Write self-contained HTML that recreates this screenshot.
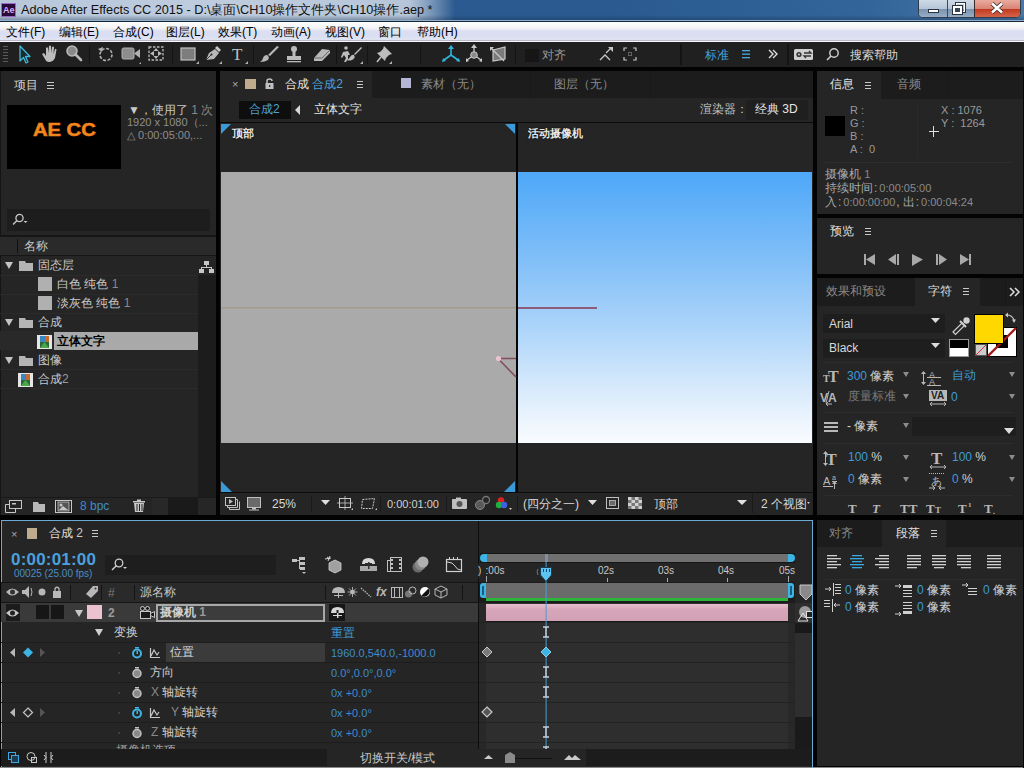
<!DOCTYPE html>
<html><head><meta charset="utf-8">
<style>
*{margin:0;padding:0;box-sizing:border-box}
html,body{width:1024px;height:768px;overflow:hidden;background:#030303;font-family:"Liberation Sans",sans-serif;font-size:12px;color:#c8c8c8}
.a{position:absolute}
.t{position:absolute;white-space:nowrap;line-height:1}
.pan{position:absolute;background:#252525}
.blue{color:#4c9fd8}
.dim{color:#8a8a8a}
</style></head><body>
<!-- TITLE BAR -->
<div class="a" style="left:0;top:0;width:1024px;height:20px;background:linear-gradient(90deg,#2b5a90 0%,#2a5a8f 60%,#33659a 85%,#4a78a6 100%)"></div>
<div class="a" style="left:0;top:0;width:455px;height:20px;background:linear-gradient(90deg,rgba(184,199,218,1) 0%,rgba(190,204,222,1) 50%,rgba(182,197,216,1) 90%,rgba(150,172,200,0.7) 95%,rgba(43,90,144,0) 100%)"></div>
<div class="a" style="left:0;top:15px;width:1024px;height:5px;background:linear-gradient(rgba(20,40,70,0),rgba(20,40,70,0.35))"></div>
<div class="a" style="left:0;top:20px;width:1024px;height:1px;background:#8eb0d0"></div>
<div class="a" style="left:0;top:21px;width:1024px;height:1px;background:#1a2634"></div>
<div class="a" style="left:1px;top:3px;width:15px;height:14px;background:#2a0a3c;border:1px solid #9b6cc6"></div>
<div class="t" style="left:3px;top:6px;font-size:9px;color:#d8b4f8;font-weight:bold">Ae</div>
<div class="t" style="left:21px;top:4px;font-size:12.7px;color:#111">Adobe After Effects CC 2015 - D:\桌面\CH10操作文件夹\CH10操作.aep *</div>
<!-- window buttons -->
<div class="a" style="left:918px;top:-2px;width:103px;height:20px;border:1px solid #2e3c4c;border-radius:0 0 5px 5px;background:#8aa0b8;overflow:hidden;box-shadow:inset 0 0 0 1px rgba(255,255,255,0.45)">
<div class="a" style="left:0;top:0;width:28px;height:10px;background:linear-gradient(#d2dce8,#b4c4d6)"></div>
<div class="a" style="left:0;top:10px;width:28px;height:9px;background:linear-gradient(#7a92ae,#9ab0c8)"></div>
<div class="a" style="left:28px;top:0;width:1px;height:19px;background:#3a4a5c"></div>
<div class="a" style="left:29px;top:0;width:26px;height:10px;background:linear-gradient(#d2dce8,#b4c4d6)"></div>
<div class="a" style="left:29px;top:10px;width:26px;height:9px;background:linear-gradient(#7a92ae,#9ab0c8)"></div>
<div class="a" style="left:55px;top:0;width:1px;height:19px;background:#3a2a2a"></div>
<div class="a" style="left:56px;top:0;width:47px;height:10px;background:linear-gradient(#eab0a4,#d88272)"></div>
<div class="a" style="left:56px;top:10px;width:47px;height:9px;background:linear-gradient(#c0381e,#d86a50)"></div>
</div>
<div class="a" style="left:928px;top:9px;width:11px;height:4px;background:#fff;border:1px solid #2a3440"></div>
<div class="a" style="left:956px;top:3px;width:9px;height:9px;border:1.5px solid #fff;outline:1px solid #2a3440"></div>
<div class="a" style="left:953px;top:6px;width:9px;height:8px;background:#3a4450;border:2px solid #fff;outline:1px solid #2a3440"></div>
<svg class="a" style="left:990px;top:2px" width="14" height="12"><path d="M2 1.5 L12 10.5 M12 1.5 L2 10.5" stroke="#3a2a2a" stroke-width="4.2"/><path d="M2 1.5 L12 10.5 M12 1.5 L2 10.5" stroke="#fff" stroke-width="2.6"/></svg>
<!-- MENU BAR -->
<div class="a" style="left:0;top:22px;width:1024px;height:20px;background:linear-gradient(#fbfefe 0%,#f4f4f6 30%,#dcdff2 45%,#d9def2 70%,#e0e4f2 88%,#b8bac8 90%,#b8bac8 94%,#f8f8fc 95%,#f8f8fc 100%)"></div>
<div class="t" style="left:6px;top:26px;font-size:12px;color:#000">文件(F)</div>
<div class="t" style="left:59px;top:26px;font-size:12px;color:#000">编辑(E)</div>
<div class="t" style="left:113px;top:26px;font-size:12px;color:#000">合成(C)</div>
<div class="t" style="left:166px;top:26px;font-size:12px;color:#000">图层(L)</div>
<div class="t" style="left:218px;top:26px;font-size:12px;color:#000">效果(T)</div>
<div class="t" style="left:271px;top:26px;font-size:12px;color:#000">动画(A)</div>
<div class="t" style="left:325px;top:26px;font-size:12px;color:#000">视图(V)</div>
<div class="t" style="left:378px;top:26px;font-size:12px;color:#000">窗口</div>
<div class="t" style="left:417px;top:26px;font-size:12px;color:#000">帮助(H)</div>
<!-- TOOLBAR -->
<div class="a" style="left:0;top:42px;width:1024px;height:25px;background:#202020"></div>
<svg class="a" style="left:0;top:42px" width="1024" height="25" viewBox="0 0 1024 25">
<g fill="#5a5a5a"><rect x="3" y="4" width="5" height="1"/><rect x="3" y="7" width="5" height="1"/><rect x="3" y="10" width="5" height="1"/><rect x="3" y="13" width="5" height="1"/><rect x="3" y="16" width="5" height="1"/><rect x="3" y="19" width="5" height="1"/></g>
<g fill="#141414"><rect x="89" y="3" width="1" height="19"/><rect x="172" y="3" width="1" height="19"/><rect x="253" y="3" width="1" height="19"/><rect x="336" y="3" width="1" height="19"/><rect x="367" y="3" width="1" height="19"/><rect x="420" y="3" width="1" height="19"/><rect x="515" y="3" width="1" height="19"/><rect x="680" y="2" width="2" height="21"/><rect x="787" y="2" width="2" height="21"/></g>
<!-- arrow -->
<path d="M20 4 L20 19 L23.5 15.5 L26 21 L28 20 L25.5 14.5 L30 14.5 Z" fill="#1a2a30" stroke="#3fb8d8" stroke-width="1.3" stroke-linejoin="round"/>
<!-- hand -->
<path d="M42 12 L44 11 L46 14 L46 6 Q47 4.5 48 6 L48.5 11 L49 4 Q50 3 51 4 L51 11 L52 5 Q53 4 54 5 L53.5 12 L55 7 Q56 6.5 56.5 7.5 L55 16 Q53 20 49 20 Q46 20 45 17 Z" fill="#bdbdbd"/>
<!-- magnifier -->
<circle cx="72" cy="9" r="5" fill="#8a8a8a" stroke="#b8b8b8" stroke-width="1.6"/><path d="M75.5 12.5 L81 18" stroke="#b8b8b8" stroke-width="2.6" stroke-linecap="round"/>
<!-- rotate -->
<circle cx="106" cy="12.5" r="6" fill="none" stroke="#b0b0b0" stroke-width="1.6" stroke-dasharray="3 1.6"/>
<path d="M98 7 L103 5 L102 10 Z" fill="#b0b0b0"/>
<!-- camera -->
<rect x="122" y="6" width="12" height="11" rx="1.5" fill="#8d8d8d" stroke="#b0b0b0" stroke-width="1"/><path d="M134 11.5 L140 7 L140 16 Z" fill="#b0b0b0"/><path d="M139 22 L141 20 L141 22 Z" fill="#b0b0b0"/>
<!-- pan behind -->
<g stroke="#b8b8b8" stroke-width="1.3" fill="none" stroke-dasharray="2.5 1.5"><rect x="149" y="5" width="14" height="13"/></g>
<path d="M150 11.5 L154 9 L154 14 Z M162 11.5 L158 9 L158 14 Z M156 6 L153.5 9 L158.5 9 Z M156 17 L153.5 14 L158.5 14 Z" fill="#b8b8b8"/>
<!-- rect -->
<rect x="181" y="6" width="14" height="12" fill="#7d7d7d" stroke="#c0c0c0" stroke-width="1.2"/><path d="M196 22 L199 19 L199 22 Z" fill="#b0b0b0"/>
<!-- pen -->
<path d="M206 18 L209 11 L215 7 L219 11 L214 17 Z" fill="#b8b8b8"/><path d="M215 6 L217 4 L221 8 L219 10 Z" fill="#c8c8c8"/><path d="M206 18 L211 13" stroke="#222" stroke-width="0.8"/><circle cx="211.5" cy="12.5" r="1" fill="#222"/><path d="M219 22 L222 19 L222 22 Z" fill="#b0b0b0"/>
<!-- T -->
<text x="232" y="18" font-family="Liberation Serif" font-size="17" fill="#c0c0c0">T</text><path d="M245 22 L248 19 L248 22 Z" fill="#b0b0b0"/>
<!-- brush -->
<path d="M277 4 L279 5 L270 14 L268 13 Z" fill="#b8b8b8"/><path d="M267 13 Q270 15 268 18 Q265 20 260 20 Q263 18 263 16 Q264 13 267 13 Z" fill="#b8b8b8"/>
<!-- stamp -->
<circle cx="294" cy="7" r="3" fill="#bbb"/><rect x="292.5" y="9" width="3" height="6" fill="#bbb"/><rect x="287" y="14" width="14" height="4" fill="#bbb"/><rect x="287" y="19" width="14" height="1.3" fill="#bbb"/>
<!-- eraser -->
<path d="M314 16 L322 7 L330 8 L330 11 L322 19 L314 19 Z" fill="#b8b8b8"/><path d="M314 16 L322 16 L330 8" stroke="#555" stroke-width="0.8" fill="none"/>
<!-- roto -->
<circle cx="346" cy="6" r="1.8" fill="#bbb"/><path d="M343 10 L348 9 L350 13 L348 13 L348 17 L346 20 L344 20 L346 16 L344 13 L342 16 L341 15 Z" fill="#bbb"/><path d="M361 5 L362 6 L355 13 L354 12 Z M354 13 Q356 16 352 18 Q349 19 347 18 Q350 16 350 15 Q352 12 354 13Z" fill="#bbb"/><path d="M360 22 L363 19 L363 22 Z" fill="#b0b0b0"/>
<!-- pin -->
<path d="M384 4 L392 12 L389 13 L386 16 L385 19 L377 11 L380 10 L383 7 Z" fill="#bdbdbd"/><path d="M381 15 L377 20" stroke="#bdbdbd" stroke-width="1.6"/><path d="M389 22 L392 19 L392 22 Z" fill="#b0b0b0"/>
<!-- axis blue -->
<g stroke="#32b4dc" stroke-width="1.6" fill="#32b4dc"><path d="M451 13 L451 5" /><path d="M451 13 L444 18"/><path d="M451 13 L458 18"/></g>
<path d="M451 3 L448 7 L454 7 Z M442 20 L443 16 L446 19 Z M460 20 L459 16 L456 19 Z" fill="#32b4dc"/>
<!-- local axis -->
<g stroke="#c8c8c8" stroke-width="1.3"><path d="M474 13 L474 4"/><path d="M474 13 L467 18"/><path d="M474 13 L481 18"/></g><circle cx="474" cy="13" r="3.3" fill="#8a8a8a" stroke="#c8c8c8"/><path d="M474 2 L471 6 L477 6 Z M466 20 L466 16 L469 19 Z M482 20 L482 16 L479 19 Z" fill="#c8c8c8"/>
<!-- world axis -->
<path d="M493 8 L505 5 L505 17 L493 19 Z" fill="#7a7a7a" stroke="#c8c8c8" stroke-width="1.2"/><path d="M491 6 L504 19" stroke="#c8c8c8" stroke-width="1.3"/><path d="M490 5 L494 5 L490 9 Z" fill="#c8c8c8"/>
<!-- align checkbox -->
<rect x="525" y="7" width="14" height="13" fill="#161616"/>
<!-- snap icons -->
<path d="M600 18 L605 13 L610 18" stroke="#c8c8c8" stroke-width="1.3" fill="none"/><path d="M606 11 L611 6" stroke="#c8c8c8" stroke-width="1.2"/><path d="M608 5 L613 5 L613 10 Z" fill="#c8c8c8"/>
<g stroke="#c8c8c8" stroke-width="1.2" fill="none"><path d="M624 9 L624 6 L627 6 M633 6 L636 6 L636 9 M636 15 L636 18 L633 18 M627 18 L624 18 L624 15"/></g><rect x="628.5" y="10.5" width="3" height="3" fill="none" stroke="#c8c8c8" stroke-width="0.8" stroke-dasharray="1 1"/>
<!-- hamburger blue -->
<g fill="#4aa8e0"><rect x="742" y="8" width="8" height="1.3"/><rect x="742" y="11.5" width="8" height="1.3"/><rect x="742" y="15" width="8" height="1.3"/></g>
<path d="M769 8 L773 12 L769 16 M773 8 L777 12 L773 16" stroke="#dcdcdc" stroke-width="1.4" fill="none"/>
<!-- gear swap -->
<rect x="794" y="7" width="19" height="11" rx="1.5" fill="#cfcfcf"/><circle cx="799" cy="12.5" r="2.6" fill="#333"/><circle cx="799" cy="12.5" r="1" fill="#cfcfcf"/><path d="M804 11 L811 11 L809 9 M811 14 L804 14 L806 16" stroke="#333" stroke-width="1.3" fill="none"/>
<!-- search -->
<circle cx="834" cy="11" r="4.2" fill="none" stroke="#d0d0d0" stroke-width="1.4"/><path d="M831 14 L827 18" stroke="#d0d0d0" stroke-width="1.6"/>
</svg>
<div class="t" style="left:542px;top:49px;font-size:12px;color:#9a9a9a">对齐</div>
<div class="t" style="left:705px;top:49px;font-size:12px;color:#3fa2dc">标准</div>
<div class="t" style="left:850px;top:49px;font-size:12px;color:#d8d8d8">搜索帮助</div>

<!-- PROJECT PANEL -->
<div class="pan" style="left:0;top:71px;width:216px;height:444px"></div>
<div class="a" style="left:0;top:71px;width:1px;height:444px;background:#151515"></div>
<div class="t" style="left:14px;top:79px;font-size:12px;color:#d0d0d0">项目</div>
<div class="a" style="left:47px;top:82px;width:7px;height:1px;background:#c8c8c8;box-shadow:0 3px 0 #c8c8c8,0 6px 0 #c8c8c8"></div>
<div class="a" style="left:7px;top:105px;width:114px;height:64px;background:#000"></div>
<div class="t" style="left:33px;top:121px;font-size:18px;font-weight:bold;color:#f28a22;letter-spacing:0px;transform:scaleX(1.12);transform-origin:left;-webkit-text-stroke:0.6px #f07a10">AE CC</div>
<div class="t" style="left:128px;top:104px;font-size:12px;color:#c8c8c8">▼，使用了 <span style="color:#8a8a8a">1 次</span></div>
<div class="t" style="left:127px;top:117px;font-size:11px;color:#8f8f8f">1920 x 1080（...</div>
<div class="t" style="left:127px;top:130px;font-size:11px;color:#8f8f8f">△ 0:00:05:00,...</div>
<div class="a" style="left:7px;top:209px;width:203px;height:22px;background:#1d1d1d"></div>
<svg class="a" style="left:10px;top:212px" width="24" height="16"><circle cx="9.5" cy="6" r="3.6" fill="none" stroke="#c8c8c8" stroke-width="1.3"/><path d="M7 8.5 L3 12.5" stroke="#c8c8c8" stroke-width="1.4"/><path d="M13.5 9 L17.5 9 L15.5 11 Z" fill="#c8c8c8"/></svg>
<div class="a" style="left:0;top:235px;width:216px;height:2px;background:#161616"></div>
<div class="a" style="left:0;top:237px;width:216px;height:18px;background:#2a2a2a"></div>
<div class="a" style="left:17px;top:239px;width:1px;height:14px;background:#111"></div>
<div class="t" style="left:24px;top:240px;font-size:12px;color:#c8c8c8">名称</div>
<div class="a" style="left:0;top:255px;width:216px;height:1px;background:#161616"></div>
<div class="a" style="left:198px;top:275px;width:18px;height:222px;background:#1c1c1c"></div>
<!-- row lines -->
<div class="a" style="left:0;top:275px;width:198px;height:1px;background:#2b2b2b"></div>
<div class="a" style="left:0;top:294px;width:198px;height:1px;background:#2b2b2b"></div>
<div class="a" style="left:0;top:313px;width:198px;height:1px;background:#2b2b2b"></div>
<div class="a" style="left:0;top:331px;width:54px;height:19px;background:#292929"></div>
<div class="a" style="left:54px;top:332px;width:144px;height:18px;background:#a9a9a9"></div>
<div class="a" style="left:0;top:369px;width:198px;height:1px;background:#2b2b2b"></div>
<div class="a" style="left:0;top:388px;width:198px;height:1px;background:#2b2b2b"></div>
<svg class="a" style="left:0;top:256px" width="216" height="135">
<g fill="#c4c4c4"><path d="M5 6 L13 6 L9 13 Z"/><path d="M5 63 L13 63 L9 70 Z"/><path d="M5 101 L13 101 L9 108 Z"/></g>
<g fill="#b4b4b4"><path d="M19 5 L25 5 L26 7 L33 7 L33 15 L19 15 Z"/><path d="M19 62 L25 62 L26 64 L33 64 L33 72 L19 72 Z"/><path d="M19 100 L25 100 L26 102 L33 102 L33 110 L19 110 Z"/></g>
<rect x="38" y="21" width="14" height="14" fill="#b0b0b0"/><rect x="38" y="40" width="14" height="14" fill="#b0b0b0"/>
<g><rect x="37" y="79" width="15" height="14" fill="#e6e6e6"/><rect x="40" y="80" width="9" height="12" fill="#2a6a3a"/><rect x="40" y="80" width="5" height="6" fill="#3a86c0"/><rect x="45" y="80" width="4" height="6" fill="#c86a2a"/><path d="M40 92 L44.5 86 L49 92Z" fill="#4aa84a"/></g>
<g><rect x="18" y="117" width="15" height="14" fill="#e6e6e6"/><rect x="21" y="118" width="9" height="12" fill="#2a6a3a"/><rect x="21" y="118" width="5" height="6" fill="#3a86c0"/><rect x="26" y="118" width="4" height="6" fill="#c86a2a"/><path d="M21 130 L25.5 124 L30 130Z" fill="#4aa84a"/></g>
<g fill="#c8c8c8"><rect x="204" y="5" width="5" height="4"/><rect x="206" y="9" width="1" height="2"/><rect x="201" y="11" width="11" height="1"/><rect x="201" y="11" width="1" height="2"/><rect x="211" y="11" width="1" height="2"/><rect x="199" y="13" width="5" height="4"/><rect x="209" y="13" width="5" height="4"/></g>
</svg>
<div class="t" style="left:38px;top:259px;font-size:12px;color:#c8c8c8">固态层</div>
<div class="t" style="left:57px;top:278px;font-size:12px;color:#c8c8c8">白色 纯色 <span style="color:#8a8a8a">1</span></div>
<div class="t" style="left:57px;top:297px;font-size:12px;color:#c8c8c8">淡灰色 纯色 <span style="color:#8a8a8a">1</span></div>
<div class="t" style="left:38px;top:316px;font-size:12px;color:#c8c8c8">合成</div>
<div class="t" style="left:57px;top:335px;font-size:12px;color:#000;font-weight:bold">立体文字</div>
<div class="t" style="left:38px;top:354px;font-size:12px;color:#c8c8c8">图像</div>
<div class="t" style="left:38px;top:373px;font-size:12px;color:#c8c8c8">合成<span style="color:#9a9a9a">2</span></div>
<!-- bottom bar -->
<div class="a" style="left:0;top:497px;width:216px;height:1px;background:#191919"></div>
<div class="a" style="left:152px;top:498px;width:16px;height:17px;background:#282828"></div>
<div class="a" style="left:168px;top:498px;width:30px;height:17px;background:#1a1a1a"></div>
<div class="a" style="left:198px;top:498px;width:18px;height:17px;background:#262626"></div>
<svg class="a" style="left:0;top:497px" width="152" height="18">
<g fill="none" stroke="#c8c8c8" stroke-width="1"><rect x="9.5" y="3.5" width="12" height="8"/><path d="M5.5 7.5 L9 7.5 M5.5 7.5 L5.5 15.5 L15.5 15.5 L15.5 12"/></g><rect x="12" y="6" width="4" height="1.5" fill="#c8c8c8"/>
<path d="M33 5 L38 5 L39 7 L45 7 L45 15 L33 15 Z" fill="#b8b8b8"/>
<rect x="55.5" y="3.5" width="16" height="12" fill="none" stroke="#c8c8c8"/><rect x="58" y="5" width="11" height="9" fill="#555" stroke="#c8c8c8" stroke-width="0.8"/><circle cx="61" cy="8" r="1.5" fill="#c8c8c8"/><path d="M59 13 L63 9 L68 13Z" fill="#c8c8c8"/>
<g fill="#c8c8c8"><rect x="133" y="4" width="12" height="1.5"/><rect x="137" y="2.5" width="4" height="1.5"/><path d="M134 6 L144 6 L143 15 L135 15 Z"/></g><g fill="#232323"><rect x="136.5" y="7" width="1" height="7"/><rect x="139" y="7" width="1" height="7"/><rect x="141.5" y="7" width="1" height="7"/></g>
</svg>
<div class="t" style="left:80px;top:500px;font-size:12px;color:#3e8cc4">8 bpc</div>

<!-- COMP PANEL -->
<div class="pan" style="left:220px;top:71px;width:593px;height:444px"></div>
<div class="a" style="left:372px;top:71px;width:441px;height:27px;background:#1c1c1c"></div>
<div class="a" style="left:530px;top:71px;width:1px;height:27px;background:#191919"></div>
<div class="a" style="left:650px;top:71px;width:1px;height:27px;background:#191919"></div>
<div class="t" style="left:232px;top:79px;font-size:11px;color:#a8a8a8">×</div>
<div class="a" style="left:245px;top:79px;width:11px;height:10px;background:#bfac8c"></div>
<svg class="a" style="left:264px;top:78px" width="12" height="12"><path d="M3 5 L3 3 Q3 1 5.5 1 Q8 1 8 3" fill="none" stroke="#c0c0c0" stroke-width="1.5"/><rect x="1.5" y="5" width="8" height="6" fill="#c0c0c0"/><rect x="5" y="7" width="1.3" height="2" fill="#333"/></svg>
<div class="t" style="left:285px;top:78px;font-size:12px;color:#e6e6e6">合成 <span style="color:#4ea2d8">合成<span style="font-size:12px">2</span></span></div>
<div class="a" style="left:357px;top:81px;width:6px;height:1px;background:#c8c8c8;box-shadow:0 3px 0 #c8c8c8,0 6px 0 #c8c8c8"></div>
<div class="a" style="left:401px;top:78px;width:10px;height:10px;background:#b5b5d6"></div>
<div class="t" style="left:421px;top:78px;font-size:12px;color:#8a8a8a">素材（无）</div>
<div class="t" style="left:554px;top:78px;font-size:12px;color:#8a8a8a">图层（无）</div>
<!-- breadcrumb -->
<div class="a" style="left:239px;top:101px;width:52px;height:18px;background:#0e0e0e"></div>
<div class="t" style="left:249px;top:103px;font-size:12px;color:#4ea2d8">合成2</div>
<svg class="a" style="left:294px;top:104px" width="8" height="12"><path d="M6 1 L1 6 L6 11 Z" fill="#d8d8d8"/></svg>
<div class="t" style="left:314px;top:103px;font-size:12px;color:#e6e6e6">立体文字</div>
<div class="t" style="left:700px;top:103px;font-size:12px;color:#c0c0c0">渲染器：</div>
<div class="a" style="left:746px;top:100px;width:62px;height:20px;background:#1f1f1f"></div>
<div class="t" style="left:755px;top:103px;font-size:12px;color:#e6e6e6">经典 3D</div>
<div class="a" style="left:220px;top:122px;width:593px;height:1px;background:#0a0a0a"></div>
<!-- views -->
<div class="a" style="left:221px;top:172px;width:295px;height:271px;background:#aaaaaa"></div>
<div class="a" style="left:518px;top:172px;width:294px;height:271px;background:linear-gradient(#4ea8f8 0%,#7dbdf8 30%,#a8d2f9 55%,#d4e8fb 78%,#fafcff 100%)"></div>
<div class="a" style="left:516px;top:123px;width:2px;height:370px;background:#050505"></div>
<div class="a" style="left:220px;top:492px;width:593px;height:1px;background:#0c0c0c"></div>
<svg class="a" style="left:220px;top:123px" width="593" height="370">
<path d="M1 1 L11 1 L1 11 Z" fill="#3a9ad8"/>
<path d="M285 1 L295 1 L295 11 Z" fill="#3a9ad8"/>
<path d="M1 358 L1 369 L12 369 Z" fill="#3a9ad8"/>
<path d="M295 358 L295 369 L284 369 Z" fill="#3a9ad8"/>
<rect x="1" y="184" width="295" height="1.3" fill="#a49a88"/>
<rect x="298" y="184" width="79" height="2" fill="#8c5c78"/>
<path d="M278 235.5 L296 235.5 M278 235.5 L296 254" stroke="#80505e" stroke-width="1.6" fill="none"/>
<circle cx="278.5" cy="235.5" r="2.6" fill="#ebc3cf"/>
</svg>
<div class="t" style="left:232px;top:128px;font-size:11px;color:#e8e8e8;font-weight:bold;text-shadow:0 0 2px #000">顶部</div>
<div class="t" style="left:528px;top:128px;font-size:11px;color:#e8e8e8;font-weight:bold;text-shadow:0 0 2px #000">活动摄像机</div>
<!-- bottom bar -->
<div class="a" style="left:220px;top:493px;width:593px;height:20px;background:#252525"></div>
<svg class="a" style="left:220px;top:493px" width="593" height="22">
<g fill="none" stroke="#c0c0c0" stroke-width="1"><rect x="5.5" y="4.5" width="10" height="8"/><path d="M7.5 12.5 L7.5 14.5 L17.5 14.5 L17.5 6.5 L15.5 6.5 M9.5 14.5 L9.5 16.5 L19.5 16.5 L19.5 8.5"/></g><path d="M9 6 L13 8.5 L9 11Z" fill="#c0c0c0"/>
<rect x="27.5" y="4.5" width="13" height="10" fill="#6a6a6a" stroke="#c0c0c0"/><rect x="32" y="15" width="4" height="1.5" fill="#c0c0c0"/><rect x="29" y="16.5" width="10" height="1" fill="#c0c0c0"/>
<rect x="91" y="3" width="1" height="16" fill="#1a1a1a"/>
<path d="M101 7 L110 7 L105.5 12 Z" fill="#e0e0e0"/>
<g fill="none" stroke="#c8c8c8" stroke-width="1"><rect x="119.5" y="5.5" width="11" height="9"/><path d="M125 3 L125 17 M117 10 L133 10" stroke-width="0.8"/><path d="M142.5 6.5 L154.5 5.5 L152.5 15.5 L141.5 15.5 Z" stroke-dasharray="2 1"/></g>
<path d="M131 17 L133 15 L133 17Z M155 17 L157 15 L157 17Z" fill="#c8c8c8"/>
<rect x="160" y="3" width="1" height="16" fill="#1a1a1a"/>
<rect x="226" y="3" width="1" height="16" fill="#1a1a1a"/>
<rect x="232" y="6" width="15" height="10" rx="1" fill="#c0c0c0"/><rect x="236" y="4.5" width="5" height="2" fill="#c0c0c0"/><circle cx="239.5" cy="11" r="3" fill="#555"/>
<circle cx="260" cy="12" r="4.5" fill="#5a5a5a" stroke="#888" stroke-width="1"/><circle cx="266" cy="7" r="3.5" fill="none" stroke="#777" stroke-width="1.3"/>
<circle cx="281" cy="7.5" r="3.2" fill="#e02020"/><circle cx="279" cy="12" r="3.2" fill="#20b040"/><circle cx="284" cy="12" r="3.2" fill="#4060e0"/><path d="M289 15 L292 15 L290.5 17Z" fill="#c8c8c8"/>
<rect x="297" y="3" width="1" height="16" fill="#1a1a1a"/>
<path d="M368 7 L377 7 L372.5 12 Z" fill="#e0e0e0"/>
<rect x="386.5" y="4.5" width="12" height="11" fill="none" stroke="#c0c0c0"/><rect x="389.5" y="7.5" width="6" height="5" fill="#6a6a6a" stroke="#c0c0c0" stroke-width="0.8"/>
<g fill="#d0d0d0"><rect x="408" y="4" width="14" height="12" fill="#777"/><rect x="408" y="4" width="3.5" height="3"/><rect x="415" y="4" width="3.5" height="3"/><rect x="411.5" y="7" width="3.5" height="3"/><rect x="418.5" y="7" width="3.5" height="3"/><rect x="408" y="10" width="3.5" height="3"/><rect x="415" y="10" width="3.5" height="3"/><rect x="411.5" y="13" width="3.5" height="3"/><rect x="418.5" y="13" width="3.5" height="3"/></g>
<path d="M517 7 L527 7 L522 12 Z" fill="#e0e0e0"/>
<rect x="532" y="0" width="1" height="20" fill="#1a1a1a"/>
<path d="M587 9 L590 9 L588.5 11Z" fill="#c8c8c8"/>
</svg>
<div class="t" style="left:272px;top:498px;font-size:12px;color:#d8d8d8">25%</div>
<div class="t" style="left:387px;top:499px;font-size:11px;color:#d0d0d0">0:00:01:00</div>
<div class="t" style="left:523px;top:498px;font-size:12px;color:#d8d8d8">(四分之一)</div>
<div class="t" style="left:654px;top:498px;font-size:12px;color:#d8d8d8">顶部</div>
<div class="t" style="left:761px;top:498px;font-size:12px;color:#d8d8d8">2 个视图</div>

<!-- INFO -->
<div class="pan" style="left:817px;top:71px;width:207px;height:143px"></div>
<div class="a" style="left:881px;top:71px;width:143px;height:28px;background:#1c1c1c"></div>
<div class="a" style="left:948px;top:71px;width:1px;height:28px;background:#191919"></div>

<div class="t" style="left:830px;top:78px;font-size:12px;color:#e0e0e0">信息</div>
<div class="a" style="left:865px;top:82px;width:6px;height:1px;background:#c8c8c8;box-shadow:0 3px 0 #c8c8c8,0 6px 0 #c8c8c8"></div>
<div class="t" style="left:897px;top:78px;font-size:12px;color:#8a8a8a">音频</div>
<div class="a" style="left:825px;top:116px;width:20px;height:20px;background:#000"></div>
<div class="t" style="left:850px;top:104px;font-size:11px;line-height:13px;color:#9a9a9a;white-space:pre">R :
G :
B :
A :  0</div>
<div class="a" style="left:917px;top:103px;width:1px;height:54px;background:#2a2a2a"></div>
<div class="t" style="left:941px;top:104px;font-size:11px;line-height:13px;color:#9a9a9a;white-space:pre">X : 1076
Y :  1264</div>
<div class="a" style="left:929px;top:131px;width:10px;height:1px;background:#e0e0e0"></div>
<div class="a" style="left:933px;top:126px;width:1px;height:11px;background:#e0e0e0"></div>
<div class="a" style="left:825px;top:162px;width:188px;height:1px;background:#2d2d2d"></div>
<div class="t" style="left:825px;top:167px;font-size:12px;line-height:14px;color:#a8a8a8;white-space:pre">摄像机 <span style="color:#8a8a8a;font-size:11px">1</span>
持续时间<span style="margin:0 2px 0 1px">:</span><span style="color:#8a8a8a;font-size:11px">0:00:05:00</span>
入<span style="margin:0 2px 0 1px">:</span><span style="color:#8a8a8a;font-size:11px">0:00:00:00</span><span style="margin:0 3px 0 1px">,</span>出<span style="margin:0 2px 0 1px">:</span><span style="color:#8a8a8a;font-size:11px">0:00:04:24</span></div>
<!-- PREVIEW -->
<div class="pan" style="left:817px;top:218px;width:207px;height:56px"></div>
<div class="t" style="left:830px;top:225px;font-size:12px;color:#e0e0e0">预览</div>
<div class="a" style="left:865px;top:228px;width:6px;height:1px;background:#c8c8c8;box-shadow:0 3px 0 #c8c8c8,0 6px 0 #c8c8c8"></div>
<svg class="a" style="left:860px;top:252px" width="120" height="16" fill="#a8a8a8">
<rect x="4" y="2" width="2" height="11"/><path d="M6 7.5 L15 2 L15 13Z"/>
<path d="M28 7.5 L36 2 L36 13Z"/><rect x="37" y="2" width="2" height="11"/>
<path d="M52 2 L63 7.5 L52 14Z"/>
<rect x="76" y="2" width="2" height="11"/><path d="M79 2 L87 7.5 L79 13Z"/>
<path d="M100 2 L109 7.5 L100 13Z"/><rect x="109" y="2" width="2" height="11"/>
</svg>
<!-- CHARACTER -->
<div class="pan" style="left:817px;top:278px;width:207px;height:237px"></div>
<div class="a" style="left:817px;top:278px;width:98px;height:28px;background:#1c1c1c"></div>
<div class="a" style="left:980px;top:278px;width:44px;height:28px;background:#1c1c1c"></div>
<div class="a" style="left:1005px;top:278px;width:1px;height:28px;background:#161616"></div>
<div class="t" style="left:826px;top:285px;font-size:12px;color:#8a8a8a">效果和预设</div>
<div class="t" style="left:928px;top:285px;font-size:12px;color:#e0e0e0">字符</div>
<div class="a" style="left:963px;top:288px;width:6px;height:1px;background:#c8c8c8;box-shadow:0 3px 0 #c8c8c8,0 6px 0 #c8c8c8"></div>
<svg class="a" style="left:1008px;top:285px" width="14" height="14"><path d="M2 3 L6 7 L2 11 M7 3 L11 7 L7 11" stroke="#e0e0e0" stroke-width="1.5" fill="none"/></svg>
<div class="a" style="left:823px;top:314px;width:122px;height:19px;background:#1e1e1e"></div>
<div class="a" style="left:823px;top:339px;width:122px;height:19px;background:#1e1e1e"></div>
<div class="t" style="left:829px;top:318px;font-size:12px;color:#d8d8d8">Arial</div>
<div class="t" style="left:829px;top:342px;font-size:12px;color:#d8d8d8">Black</div>
<div class="a" style="left:823px;top:362px;width:190px;height:1px;background:#2c2c2c"></div>
<div class="a" style="left:823px;top:412px;width:190px;height:1px;background:#2c2c2c"></div>
<div class="a" style="left:823px;top:443px;width:190px;height:1px;background:#2c2c2c"></div>
<div class="a" style="left:823px;top:495px;width:190px;height:1px;background:#2c2c2c"></div>
<div class="a" style="left:912px;top:417px;width:104px;height:19px;background:#1e1e1e"></div>

<svg class="a" style="left:817px;top:306px" width="207" height="210">
<g fill="#dcdcdc"><path d="M114 12 L123 12 L118.5 17Z"/><path d="M114 37 L123 37 L118.5 42Z"/><path d="M187 122 L197 122 L192 128Z"/></g>
<g fill="#8c8c8c"><path d="M86 66 L92 66 L89 71Z"/><path d="M86 88 L92 88 L89 93Z"/><path d="M86 117 L92 117 L89 122Z"/><path d="M86 149 L92 149 L89 154Z"/><path d="M86 171 L92 171 L89 176Z"/><path d="M192 66 L198 66 L195 71Z"/><path d="M192 88 L198 88 L195 93Z"/><path d="M192 149 L198 149 L195 154Z"/><path d="M192 171 L198 171 L195 176Z"/></g>
<!-- eyedropper -->
<path d="M136 26 L145 17 L147.5 19.5 L138.5 28.5 Z" fill="none" stroke="#d0d0d0" stroke-width="1.2"/>
<path d="M143 15 L149 21" stroke="#d0d0d0" stroke-width="2"/>
<circle cx="149.5" cy="14.5" r="3.2" fill="#d0d0d0"/>
<!-- swatches -->
<rect x="170.5" y="21.5" width="29" height="29" fill="#fff" stroke="#000" stroke-width="1"/>
<rect x="179" y="29" width="12" height="13" fill="#000"/>
<path d="M171 50 L199 22" stroke="#a01818" stroke-width="2.4"/>
<rect x="157.5" y="8.5" width="29" height="29" fill="#ffd800" stroke="#000" stroke-width="1"/>
<path d="M190 9 Q195 9 197 14" stroke="#c8c8c8" stroke-width="1.2" fill="none"/><path d="M188 9 L191 6.5 L191 11.5Z M195 13.5 L199 13.5 L197 17Z" fill="#c8c8c8"/>
<rect x="132.5" y="33.5" width="19" height="17" fill="#fff" stroke="#999"/><rect x="133" y="34" width="18" height="8" fill="#000"/>
<rect x="158.5" y="38.5" width="11" height="11" fill="#ccc" stroke="#555"/><path d="M159 49 L169 39" stroke="#e03030" stroke-width="1"/>
<!-- icons row -->
<g fill="#b8b8b8" font-family="Liberation Serif" font-weight="bold">
<text x="6" y="76" font-size="10">T</text><text x="11" y="76" font-size="16">T</text>
<text x="18" y="207" font-size="13" transform="translate(13 0)">T</text><text x="55" y="207" font-size="13" font-style="italic">T</text><text x="83" y="207" font-size="13">TT</text><text x="109" y="207" font-size="13">T</text><text x="118" y="207" font-size="9">T</text><text x="141" y="207" font-size="13">T</text><text x="151" y="201" font-size="7">1</text><text x="167" y="207" font-size="13">T</text><text x="176" y="208" font-size="8">.</text>
<text x="9" y="159" font-size="16">T</text>
<text x="114" y="158" font-size="17">T</text>
</g>
<g fill="#b8b8b8" font-family="Liberation Sans">
<text x="112" y="72" font-size="9">A</text><text x="112" y="79" font-size="9">A</text>
<text x="3" y="96" font-size="12" font-weight="bold">V</text><text x="11" y="96" font-size="12" font-weight="bold">A</text>
<text x="6" y="179" font-size="11">A</text><text x="15" y="174" font-size="7">a</text>
</g>
<g fill="#b8b8b8">
<rect x="110" y="71" width="14" height="1"/><rect x="110" y="79" width="14" height="1"/>
<path d="M104 68 L106.5 65 L109 68Z M104 76 L106.5 79 L109 76Z"/><rect x="106" y="67" width="1" height="10"/>
<path d="M9 98 L15 98 M11 96 L9 98 L11 100" stroke="#b8b8b8" fill="none"/><path d="M9 97 L12 85" stroke="#b8b8b8"/>
<rect x="112" y="84" width="18" height="11"/>
<path d="M113 98 L129 98 M115 96 L113 98 L115 100 M127 96 L129 98 L127 100" stroke="#b8b8b8" fill="none"/>
<rect x="7" y="116" width="14" height="2"/><rect x="7" y="120" width="14" height="2"/><rect x="7" y="124" width="14" height="2"/>
<rect x="8" y="147" width="1" height="11"/><path d="M6 148 L8.5 145 L11 148Z M6 157 L8.5 160 L11 157Z"/>
<rect x="6" y="180" width="10" height="1"/><rect x="17" y="177" width="1" height="6"/><path d="M15 178 L17.5 175 L20 178Z"/><rect x="15" y="175" width="5" height="1"/>
<path d="M113 161 L129 161 M115 159 L113 161 L115 163 M127 159 L129 161 L127 163" stroke="#b8b8b8" fill="none"/>
<path d="M112 182 L118 182 M116 180 L118 182 L116 184 M128 182 L122 182 M124 180 L122 182 L124 184" stroke="#b8b8b8" fill="none"/>
<rect x="112" y="167" width="1" height="1"/><rect x="114" y="167" width="1" height="1"/><rect x="116" y="167" width="1" height="1"/><rect x="118" y="167" width="1" height="1"/><rect x="120" y="167" width="1" height="1"/><rect x="122" y="167" width="1" height="1"/><rect x="124" y="167" width="1" height="1"/><rect x="126" y="167" width="1" height="1"/>
</g>
<text x="114" y="93" font-size="10" font-weight="bold" fill="#222" font-family="Liberation Sans">VA</text>
<text x="114" y="179" font-size="11" fill="#b8b8b8">あ</text>
</svg>
<div class="t" style="left:847px;top:370px;font-size:12px;color:#d0d0d0"><span style="color:#3e9ad6">300</span> 像素</div>
<div class="t" style="left:952px;top:369px;font-size:12px;color:#3e9ad6">自动</div>
<div class="t" style="left:848px;top:390px;font-size:12px;color:#7a7a7a">度量标准</div>
<div class="t" style="left:951px;top:391px;font-size:12px;color:#3e9ad6">0</div>
<div class="t" style="left:847px;top:420px;font-size:12px;color:#d0d0d0">- 像素</div>
<div class="t" style="left:848px;top:451px;font-size:12px;color:#d0d0d0"><span style="color:#3e9ad6">100</span> %</div>
<div class="t" style="left:952px;top:451px;font-size:12px;color:#d0d0d0"><span style="color:#3e9ad6">100</span> %</div>
<div class="t" style="left:848px;top:473px;font-size:12px;color:#d0d0d0"><span style="color:#3e9ad6">0</span> 像素</div>
<div class="t" style="left:952px;top:473px;font-size:12px;color:#d0d0d0"><span style="color:#3e9ad6">0</span> %</div>

<!-- TIMELINE -->
<div class="pan" style="left:1px;top:520px;width:812px;height:248px;border:1px solid #6aaad4;border-bottom:none"></div>
<div class="t" style="left:11px;top:529px;font-size:11px;color:#a8a8a8">×</div>
<div class="a" style="left:27px;top:528px;width:10px;height:11px;background:#bfac8c"></div>
<div class="t" style="left:49px;top:527px;font-size:12px;color:#e0e0e0">合成<span style="color:#c8c8c8"> 2</span></div>
<div class="a" style="left:92px;top:530px;width:6px;height:1px;background:#c8c8c8;box-shadow:0 3px 0 #c8c8c8,0 6px 0 #c8c8c8"></div>
<div class="t" style="left:11px;top:551px;font-size:17px;font-weight:bold;color:#4aa0dc;letter-spacing:0.2px">0:00:01:00</div>
<div class="t" style="left:14px;top:569px;font-size:10px;color:#4a8ec4">00025 (25.00 fps)</div>
<div class="a" style="left:105px;top:555px;width:171px;height:20px;background:#1e1e1e"></div>
<svg class="a" style="left:108px;top:557px" width="24" height="16"><circle cx="11" cy="6" r="3.8" fill="none" stroke="#d0d0d0" stroke-width="1.3"/><path d="M8.5 8.5 L4 13" stroke="#d0d0d0" stroke-width="1.5"/><path d="M15 10 L19 10 L17 12 Z" fill="#d0d0d0"/></svg>
<svg class="a" style="left:285px;top:553px" width="190" height="26">
<g fill="#c0c0c0"><rect x="7" y="6" width="5" height="3"/><rect x="12" y="7" width="3" height="1"/><rect x="14" y="4" width="1" height="12"/><rect x="15" y="4" width="5" height="3"/><rect x="15" y="9" width="5" height="3"/><rect x="15" y="14" width="5" height="3"/><path d="M17 19 L21 19 L19 21Z"/></g>
<g fill="#c0c0c0"><path d="M44 10 L50 7 L56 10 L56 17 L50 20 L44 17Z" fill="#a0a0a0" stroke="#d0d0d0" stroke-width="0.8"/><path d="M42 4 L45 6 M45 3 L43 8 M40 6 L46 5" stroke="#d0d0d0" stroke-width="1"/></g>
<g fill="#a8a8a8"><rect x="75" y="13" width="17" height="5"/><path d="M77 11 Q77 5 83.5 5 Q90 5 90 11 Z" fill="#d8d8d8"/><rect x="83" y="9" width="1.5" height="7" fill="#333"/><rect x="80" y="10" width="7" height="1.2" fill="#333"/></g>
<g fill="none" stroke="#c0c0c0"><rect x="105.5" y="4.5" width="11" height="14"/><rect x="102.5" y="7.5" width="3" height="11"/></g><g fill="#c0c0c0"><rect x="106" y="6" width="2" height="2"/><rect x="106" y="10" width="2" height="2"/><rect x="106" y="14" width="2" height="2"/><rect x="114" y="6" width="2" height="2"/><rect x="114" y="10" width="2" height="2"/><rect x="114" y="14" width="2" height="2"/></g>
<circle cx="133" cy="14" r="5.5" fill="#6a6a6a"/><circle cx="135.5" cy="11.5" r="5.5" fill="#888"/><circle cx="138" cy="9" r="5.5" fill="#b0b0b0"/>
<rect x="161.5" y="6.5" width="15" height="12" fill="none" stroke="#d0d0d0" stroke-width="1.2"/><path d="M162 9 Q168 9 170 13 Q172 17 176 17" stroke="#d0d0d0" fill="none"/><g fill="#d0d0d0"><rect x="164" y="4" width="1" height="2"/><rect x="168" y="4" width="1" height="2"/><rect x="172" y="4" width="1" height="2"/></g>
</svg>
<!-- column header -->
<div class="a" style="left:1px;top:582px;width:477px;height:1px;background:#151515"></div>
<div class="a" style="left:1px;top:583px;width:477px;height:19px;background:#2a2a2a"></div>
<div class="a" style="left:1px;top:602px;width:477px;height:1px;background:#151515"></div>
<svg class="a" style="left:0;top:583px" width="478" height="19">
<g fill="#b8b8b8"><path d="M6 9 Q12 2 19 9 Q12 16 6 9Z"/><circle cx="12.5" cy="9" r="2.5" fill="#333"/>
<path d="M22 7 L25 7 L29 3 L29 15 L25 11 L22 11Z"/><path d="M31 5 Q33 9 31 13" stroke="#b8b8b8" fill="none"/>
<circle cx="42" cy="9" r="3.5"/>
<rect x="53" y="8" width="8" height="7"/><path d="M55 8 L55 5.5 Q57 3 59 5.5 L59 8" stroke="#b8b8b8" stroke-width="1.3" fill="none"/>
<path d="M86 11 L93 3 L98 3 L98 8 L91 15Z"/><circle cx="95.5" cy="5.5" r="1" fill="#333"/>
<path d="M332 10 Q332 4 338.5 4 Q345 4 345 10 Z M338 10 L339 10 L339 15 L338 15Z M334 12 L343 12 L343 13 L334 13Z"/>
<circle cx="352.5" cy="9" r="2.3"/><path d="M352.5 4 L352.5 14 M347.5 9 L357.5 9 M349 5.5 L356 12.5 M356 5.5 L349 12.5" stroke="#b8b8b8" stroke-width="0.9"/>
<path d="M361 5 L371 14" stroke="#b8b8b8" stroke-width="1.3" stroke-dasharray="1.5 1"/>
<rect x="391.5" y="4.5" width="11" height="10" fill="none" stroke="#b8b8b8"/><rect x="394" y="4" width="1" height="11"/><rect x="399" y="4" width="1" height="11"/>
<circle cx="408.5" cy="11" r="3.5" fill="#777"/><circle cx="412.5" cy="7.5" r="3.5" fill="none" stroke="#b8b8b8"/>
<circle cx="425" cy="9" r="5" fill="#fff"/><path d="M421.5 12.5 A5 5 0 0 0 428.5 5.5 Z" fill="#111"/>
<path d="M435 6 L441 3 L447 6 L447 12 L441 15 L435 12Z M435 6 L441 9 L447 6 M441 9 L441 15" fill="none" stroke="#b8b8b8"/>
</g>
<g fill="#141414"><rect x="70" y="2" width="1" height="15"/><rect x="101" y="2" width="1" height="15"/><rect x="134" y="2" width="1" height="15"/><rect x="325" y="2" width="1" height="15"/><rect x="462" y="2" width="1" height="15"/></g>
<text x="82" y="13" font-size="12" font-family="Liberation Sans" fill="#b8b8b8" font-style="italic" font-weight="bold" transform="translate(294 0)">fx</text>
</svg>
<div class="t" style="left:108px;top:587px;font-size:12px;color:#7a7a7a">#</div>
<div class="t" style="left:140px;top:586px;font-size:12px;color:#c8c8c8">源名称</div>
<!-- layer row -->
<div class="a" style="left:1px;top:603px;width:477px;height:19px;background:#3a3a3a"></div>
<div class="a" style="left:6px;top:604px;width:14px;height:17px;background:#1c1c1c"></div>
<div class="a" style="left:36px;top:605px;width:13px;height:14px;background:#161616"></div>
<div class="a" style="left:51px;top:605px;width:13px;height:14px;background:#161616"></div>
<div class="a" style="left:87px;top:605px;width:15px;height:14px;background:#ebc3d0"></div>
<div class="a" style="left:156px;top:604px;width:169px;height:18px;border:2px solid #a8a8a8;background:#3c3c3c"></div>
<div class="a" style="left:329px;top:604px;width:16px;height:17px;background:#161616"></div>
<svg class="a" style="left:0;top:603px" width="478" height="19">
<path d="M6 10 Q12.5 3 19 10 Q12.5 17 6 10Z" fill="#c8c8c8"/><circle cx="12.5" cy="10" r="2.5" fill="#222"/>
<path d="M75 7 L83 7 L79 14Z" fill="#c8c8c8"/>
<g fill="#1a1a1a" stroke="#c8c8c8" stroke-width="1"><rect x="140.5" y="8.5" width="10" height="7"/><circle cx="142.5" cy="5.5" r="2"/><circle cx="147.5" cy="5.5" r="2"/><path d="M150.5 10.5 L154.5 8.5 L154.5 14.5 L150.5 12.5Z"/></g>
<g fill="#d8d8d8"><path d="M331 10 Q331 4 337.5 4 Q344 4 344 10 Z"/><rect x="337" y="10" width="1.4" height="5"/><rect x="333" y="12" width="9" height="1"/></g>
<rect x="336.5" y="7" width="2" height="3" fill="#222"/>
</svg>
<div class="t" style="left:108px;top:607px;font-size:12px;font-weight:bold;color:#9a9a9a">2</div>
<div class="t" style="left:160px;top:606px;font-size:12px;font-weight:bold;color:#cfcfcf">摄像机 <span style="color:#9a9a9a">1</span></div>
<!-- property rows -->
<div class="a" style="left:1px;top:642px;width:477px;height:1px;background:#1d1d1d"></div>
<div class="a" style="left:1px;top:662px;width:477px;height:1px;background:#1d1d1d"></div>
<div class="a" style="left:1px;top:682px;width:477px;height:1px;background:#1d1d1d"></div>
<div class="a" style="left:1px;top:702px;width:477px;height:1px;background:#1d1d1d"></div>
<div class="a" style="left:1px;top:722px;width:477px;height:1px;background:#1d1d1d"></div>
<div class="a" style="left:1px;top:742px;width:477px;height:1px;background:#1d1d1d"></div>
<div class="a" style="left:166px;top:643px;width:159px;height:19px;background:#3b3b3b"></div>
<svg class="a" style="left:0;top:622px" width="478" height="128">
<path d="M95 7 L103 7 L99 14Z" fill="#d0d0d0"/>
<g fill="#b8b8b8"><path d="M15 26 L10 30.5 L15 35Z"/><path d="M15 86 L10 90.5 L15 95Z"/></g>
<g fill="#555"><path d="M40 26 L45 30.5 L40 35Z"/><path d="M40 86 L45 90.5 L40 95Z"/></g>
<path d="M28 25.5 L33 30.5 L28 35.5 L23 30.5Z" fill="#3cb4e4"/>
<path d="M28 86 L32.5 90.5 L28 95 L23.5 90.5Z" fill="none" stroke="#c8c8c8" stroke-width="1.2"/>
<g fill="none" stroke-width="2"><circle cx="137" cy="31.5" r="4" stroke="#3cb4e4"/><circle cx="137" cy="91.5" r="4" stroke="#3cb4e4"/></g>
<g fill="#3cb4e4"><rect x="135" y="25" width="4" height="1.5"/><rect x="135" y="85" width="4" height="1.5"/><rect x="136.5" y="29" width="1.5" height="3"/><rect x="136.5" y="89" width="1.5" height="3"/></g>
<g fill="#8a8a8a" stroke="#c0c0c0" stroke-width="1.5"><circle cx="137" cy="51.5" r="4"/><circle cx="137" cy="71.5" r="4"/><circle cx="137" cy="111.5" r="4"/></g>
<g fill="#c0c0c0"><rect x="135" y="45" width="4" height="1.5"/><rect x="135" y="65" width="4" height="1.5"/><rect x="135" y="105" width="4" height="1.5"/></g>
<g fill="none" stroke="#c8c8c8" stroke-width="1.2"><path d="M150.5 26 L150.5 35.5 L160 35.5 M151 34 L154 28 L157 33 L159 30"/><path d="M150.5 86 L150.5 95.5 L160 95.5 M151 94 L154 88 L157 93 L159 90"/></g>
<g fill="#4a4a4a"><circle cx="119" cy="31" r="1"/><circle cx="119" cy="51" r="1"/><circle cx="119" cy="71" r="1"/><circle cx="119" cy="91" r="1"/><circle cx="119" cy="111" r="1"/></g>
</svg>
<div class="t" style="left:114px;top:626px;font-size:12px;color:#d0d0d0">变换</div>
<div class="t" style="left:331px;top:627px;font-size:12px;color:#3e9ad6">重置</div>
<div class="t" style="left:170px;top:646px;font-size:12px;color:#d8d8d8">位置</div>
<div class="t" style="left:150px;top:666px;font-size:12px;color:#d0d0d0">方向</div>
<div class="t" style="left:151px;top:686px;font-size:12px;color:#d0d0d0"><span style="color:#8a8a8a">X</span> 轴旋转</div>
<div class="t" style="left:171px;top:706px;font-size:12px;color:#d0d0d0"><span style="color:#8a8a8a">Y</span> 轴旋转</div>
<div class="t" style="left:151px;top:726px;font-size:12px;color:#d0d0d0"><span style="color:#8a8a8a">Z</span> 轴旋转</div>
<div class="t" style="left:331px;top:648px;font-size:11px;color:#3e8ccc">1960.0,540.0,-1000.0</div>
<div class="t" style="left:331px;top:668px;font-size:11px;color:#3e8ccc">0.0°,0.0°,0.0°</div>
<div class="t" style="left:331px;top:688px;font-size:11px;color:#3e8ccc">0x +0.0°</div>
<div class="t" style="left:331px;top:708px;font-size:11px;color:#3e8ccc">0x +0.0°</div>
<div class="t" style="left:331px;top:728px;font-size:11px;color:#3e8ccc">0x +0.0°</div>
<div class="t" style="left:116px;top:744px;font-size:12px;color:#a0a0a0;height:5px;overflow:hidden">摄像机选项</div>
<!-- graph area -->
<div class="a" style="left:478px;top:521px;width:1px;height:228px;background:#0e0e0e"></div>
<div class="a" style="left:479px;top:521px;width:333px;height:32px;background:#252525"></div>
<div class="a" style="left:479px;top:553px;width:333px;height:50px;background:#252525"></div>
<div class="a" style="left:479px;top:603px;width:309px;height:146px;background:#2e2e2e"></div>
<div class="a" style="left:479px;top:603px;width:7px;height:146px;background:#282828"></div>
<div class="a" style="left:788px;top:603px;width:7px;height:146px;background:#282828"></div>
<div class="a" style="left:795px;top:603px;width:17px;height:146px;background:#2e2e2e"></div>
<div class="a" style="left:795px;top:623px;width:17px;height:10px;background:#191919"></div>
<div class="a" style="left:795px;top:717px;width:17px;height:32px;background:#1a1a1a"></div>
<div class="a" style="left:479px;top:622px;width:316px;height:1px;background:#232323"></div>
<div class="a" style="left:479px;top:642px;width:316px;height:1px;background:#232323"></div>
<div class="a" style="left:479px;top:662px;width:316px;height:1px;background:#232323"></div>
<div class="a" style="left:479px;top:682px;width:316px;height:1px;background:#232323"></div>
<div class="a" style="left:479px;top:702px;width:316px;height:1px;background:#232323"></div>
<div class="a" style="left:479px;top:722px;width:316px;height:1px;background:#232323"></div>
<div class="a" style="left:479px;top:742px;width:316px;height:1px;background:#232323"></div>
<!-- navigator -->
<div class="a" style="left:480px;top:553px;width:315px;height:10px;background:#161616"></div>
<div class="a" style="left:486px;top:554px;width:302px;height:8px;background:#707070"></div>
<div class="a" style="left:480px;top:554px;width:7px;height:8px;background:#3cb4e4;border-radius:4px 0 0 4px"></div>
<div class="a" style="left:788px;top:554px;width:7px;height:8px;background:#3cb4e4;border-radius:0 4px 4px 0"></div>
<div class="a" style="left:545px;top:554px;width:3px;height:8px;background:#7d8fa0"></div>
<!-- ruler -->
<div class="t" style="left:480px;top:566px;font-size:10px;color:#c8c8c8">0:00s</div>
<div class="t" style="left:598px;top:566px;font-size:10px;color:#c8c8c8">02s</div>
<div class="t" style="left:658px;top:566px;font-size:10px;color:#c8c8c8">03s</div>
<div class="t" style="left:718px;top:566px;font-size:10px;color:#c8c8c8">04s</div>
<div class="t" style="left:779px;top:566px;font-size:10px;color:#c8c8c8">05s</div>
<div class="a" style="left:478px;top:564px;width:8px;height:14px;background:#252525"></div>
<div class="t" style="left:478px;top:566px;font-size:10px;color:#c8c8c8">)</div>
<div class="a" style="left:486px;top:576px;width:1px;height:6px;background:#aaa"></div>
<div class="a" style="left:607px;top:578px;width:1px;height:4px;background:#aaa"></div>
<div class="a" style="left:667px;top:578px;width:1px;height:4px;background:#aaa"></div>
<div class="a" style="left:727px;top:578px;width:1px;height:4px;background:#aaa"></div>
<div class="a" style="left:788px;top:576px;width:1px;height:6px;background:#aaa"></div>
<!-- work area -->
<div class="a" style="left:479px;top:582px;width:316px;height:21px;background:#1c1c1c"></div>
<div class="a" style="left:486px;top:583px;width:302px;height:15px;background:#6b6b6b"></div>
<div class="a" style="left:486px;top:598px;width:302px;height:3px;background:#2db53a"></div>
<div class="a" style="left:480px;top:583px;width:6px;height:15px;background:#3cb4e4;border-radius:3px 0 0 3px"></div>
<div class="a" style="left:788px;top:583px;width:6px;height:15px;background:#3cb4e4;border-radius:0 3px 3px 0"></div>
<div class="a" style="left:482px;top:586px;width:2px;height:9px;background:#1d5a80"></div>
<div class="a" style="left:790px;top:586px;width:2px;height:9px;background:#1d5a80"></div>
<!-- pink layer bar -->
<div class="a" style="left:486px;top:604px;width:302px;height:18px;background:linear-gradient(#e6c0cf,#d7a6b9 30%,#d2a0b4)"></div>
<div class="a" style="left:486px;top:621px;width:302px;height:1px;background:#1a1a1a"></div>
<svg class="a" style="left:478px;top:553px" width="340" height="196">
<path d="M322 32 L334 32 L334 41 L328 47 L322 41Z" fill="#8a8a8a" stroke="#c8c8c8" stroke-width="1"/>
<circle cx="327" cy="59" r="6" fill="#9a9a9a"/><path d="M320 68 L325 60 L330 68Z" fill="none" stroke="#e0e0e0"/><rect x="328.5" y="58.5" width="6" height="6" fill="#222" stroke="#e0e0e0"/>
<!-- playhead line -->
<rect x="67.6" y="9" width="1" height="187" fill="#4a9ed4"/>
<path d="M62.5 14.5 L73.5 14.5 L73.5 22 L68 28.5 L62.5 22Z" fill="#5cc4f0" stroke="#1a3a50" stroke-width="1"/>
<g fill="#1d4a70"><rect x="65" y="16" width="1" height="3"/><rect x="68" y="16" width="1" height="3"/><rect x="71" y="16" width="1" height="3"/></g>
<path d="M60 16 Q58 18 60 22" stroke="#777" fill="none"/>
<!-- I-beams -->
<g fill="none" stroke="#c8d0d8" stroke-width="1.4"><path d="M65 74 L71 74 M68 74 L68 84 M65 84 L71 84"/><path d="M65 114 L71 114 M68 114 L68 124 M65 124 L71 124"/><path d="M65 134 L71 134 M68 134 L68 144 M65 144 L71 144"/><path d="M65 174 L71 174 M68 174 L68 184 M65 184 L71 184"/><path d="M65 194 L71 194 M68 194 L68 196"/></g>
<!-- keyframes -->
<path d="M9 94 L14 99 L9 104 L4 99Z" fill="#7a7a7a" stroke="#c8c8c8" stroke-width="1"/>
<path d="M68 94 L73 99 L68 104 L63 99Z" fill="#3cb4e4" stroke="#a8e0f8" stroke-width="0.8"/>
<path d="M9 154 L14 159 L9 164 L4 159Z" fill="#555" stroke="#c8c8c8" stroke-width="1.2"/>
</svg>
<!-- bottom bar -->
<div class="a" style="left:1px;top:749px;width:812px;height:17px;background:#1c1c1c"></div>
<div class="a" style="left:327px;top:749px;width:133px;height:17px;background:#252525"></div>
<div class="a" style="left:460px;top:749px;width:126px;height:17px;background:#252525"></div>
<div class="t" style="left:360px;top:752px;font-size:12px;color:#c8c8c8">切换开关/模式</div>
<svg class="a" style="left:0;top:749px" width="600" height="18">
<g fill="none" stroke="#3ca8e0" stroke-width="1"><rect x="8.5" y="3.5" width="7" height="7"/><rect x="11.5" y="6.5" width="7" height="7" fill="#1c3a50"/></g>
<g fill="none" stroke="#c8c8c8" stroke-width="1"><circle cx="31" cy="7.5" r="4"/><rect x="31.5" y="8.5" width="5" height="5"/><path d="M46 3 L46 14 M51 3 L51 14 M44 6 L46 8.5 L44 11 M53 6 L51 8.5 L53 11"/></g>
<path d="M484 10 L488.5 6 L493 10Z" fill="#c8c8c8"/>
<path d="M505 14 L505 6 L510 3 L515 6 L515 14Z" fill="#8a8a8a"/>
<rect x="515" y="9" width="37" height="1" fill="#111"/>
<path d="M564 11 L569 6 L572 9 L575 6 L581 11Z" fill="#c8c8c8"/>
</svg>
<div class="a" style="left:0;top:767px;width:1024px;height:1px;background:#8a8a8a"></div>
<div class="a" style="left:812px;top:520px;width:1px;height:248px;background:#6aaad4"></div>
<!-- PARAGRAPH -->
<div class="pan" style="left:817px;top:520px;width:207px;height:246px"></div>
<div class="a" style="left:817px;top:520px;width:65px;height:27px;background:#1c1c1c"></div>
<div class="a" style="left:946px;top:520px;width:78px;height:27px;background:#1c1c1c"></div>

<div class="t" style="left:829px;top:527px;font-size:12px;color:#8a8a8a">对齐</div>
<div class="t" style="left:896px;top:527px;font-size:12px;color:#e0e0e0">段落</div>
<div class="a" style="left:931px;top:530px;width:6px;height:1px;background:#c8c8c8;box-shadow:0 3px 0 #c8c8c8,0 6px 0 #c8c8c8"></div>
<div class="a" style="left:825px;top:579px;width:190px;height:1px;background:#2c2c2c"></div>
<svg class="a" style="left:817px;top:550px" width="207" height="70">
<g fill="#d0d0d0">
<rect x="10" y="5" width="10" height="1.3"/><rect x="10" y="8" width="14" height="1.3"/><rect x="10" y="11" width="10" height="1.3"/><rect x="10" y="14" width="14" height="1.3"/><rect x="10" y="17" width="10" height="1.3"/>
<rect x="62" y="5" width="10" height="1.3"/><rect x="58" y="8" width="14" height="1.3"/><rect x="62" y="11" width="10" height="1.3"/><rect x="58" y="14" width="14" height="1.3"/><rect x="62" y="17" width="10" height="1.3"/>
<rect x="90" y="5" width="14" height="1.3"/><rect x="90" y="8" width="14" height="1.3"/><rect x="90" y="11" width="14" height="1.3"/><rect x="90" y="14" width="14" height="1.3"/><rect x="90" y="17" width="10" height="1.3"/>
<rect x="115" y="5" width="14" height="1.3"/><rect x="115" y="8" width="14" height="1.3"/><rect x="115" y="11" width="14" height="1.3"/><rect x="115" y="14" width="14" height="1.3"/><rect x="117" y="17" width="10" height="1.3"/>
<rect x="140" y="5" width="14" height="1.3"/><rect x="140" y="8" width="14" height="1.3"/><rect x="140" y="11" width="14" height="1.3"/><rect x="140" y="14" width="14" height="1.3"/><rect x="144" y="17" width="10" height="1.3"/>
<rect x="170" y="5" width="14" height="1.3"/><rect x="170" y="8" width="14" height="1.3"/><rect x="170" y="11" width="14" height="1.3"/><rect x="170" y="14" width="14" height="1.3"/><rect x="170" y="17" width="14" height="1.3"/>
</g>
<g fill="#3ca8e0"><rect x="35" y="5" width="10" height="1.3"/><rect x="33" y="8" width="14" height="1.3"/><rect x="35" y="11" width="10" height="1.3"/><rect x="33" y="14" width="14" height="1.3"/><rect x="35" y="17" width="10" height="1.3"/></g>
<g fill="#d0d0d0">
<path d="M8 39 L14 39 M12 37 L14 39 L12 41" stroke="#d0d0d0" fill="none"/><rect x="16" y="33" width="1" height="13"/><rect x="18" y="34" width="6" height="1"/><rect x="18" y="37" width="6" height="1"/><rect x="18" y="40" width="6" height="1"/><rect x="18" y="43" width="6" height="1"/>
<rect x="7" y="50" width="6" height="1"/><rect x="7" y="53" width="6" height="1"/><rect x="7" y="56" width="6" height="1"/><rect x="15" y="49" width="1" height="13"/><path d="M23 55 L17 55 M19 53 L17 55 L19 57" stroke="#d0d0d0" fill="none"/>
<path d="M78 36 L84 36 M82 34 L84 36 L82 38" stroke="#d0d0d0" fill="none"/><rect x="86" y="35" width="9" height="3"/><rect x="86" y="40" width="9" height="1"/><rect x="86" y="43" width="9" height="1"/><rect x="86" y="46" width="9" height="1"/>
<path d="M78 64 L84 64 M82 62 L84 64 L82 66" stroke="#d0d0d0" fill="none"/><rect x="86" y="52" width="9" height="1"/><rect x="86" y="55" width="9" height="1"/><rect x="86" y="58" width="9" height="1"/><rect x="86" y="61" width="9" height="3"/>
<path d="M145 35 L151 35 M149 33 L151 35 L149 37" stroke="#d0d0d0" fill="none"/><rect x="151" y="38" width="9" height="1"/><rect x="151" y="41" width="9" height="1"/><rect x="151" y="44" width="9" height="1"/>
</g>
</svg>
<div class="t" style="left:845px;top:584px;font-size:12px;color:#d0d0d0"><span style="color:#3e9ad6">0</span> 像素</div>
<div class="t" style="left:845px;top:601px;font-size:12px;color:#d0d0d0"><span style="color:#3e9ad6">0</span> 像素</div>
<div class="t" style="left:917px;top:584px;font-size:12px;color:#d0d0d0"><span style="color:#3e9ad6">0</span> 像素</div>
<div class="t" style="left:917px;top:601px;font-size:12px;color:#d0d0d0"><span style="color:#3e9ad6">0</span> 像素</div>
<div class="t" style="left:983px;top:584px;font-size:12px;color:#d0d0d0"><span style="color:#3e9ad6">0</span> 像素</div>
<div class="a" style="left:1023px;top:67px;width:1px;height:701px;background:#050505"></div>
</body></html>
